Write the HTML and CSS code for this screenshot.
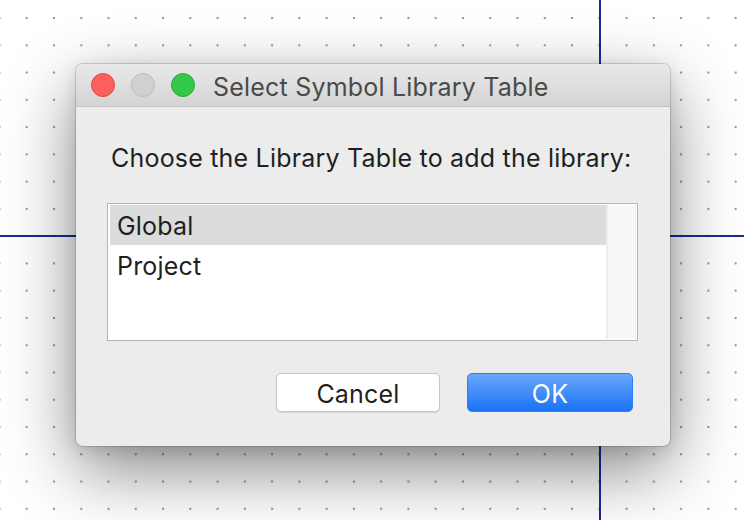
FILE: index.html
```html
<!DOCTYPE html>
<html>
<head>
<meta charset="utf-8">
<link rel="stylesheet" href="styles.css">
</head>
<body>
<div class="desktop">
  <div class="wire wire-v"></div>
  <div class="wire wire-h"></div>
  <div class="dialog">
    <div class="titlebar">
      <div class="lights">
        <span class="light red"></span>
        <span class="light gray"></span>
        <span class="light green"></span>
      </div>
      <div class="title">Select Symbol Library Table</div>
    </div>
    <div class="content">
      <div class="prompt">Choose the Library Table to add the library:</div>
      <div class="listbox">
        <div class="rows">
          <div class="row selected">Global</div>
          <div class="row">Project</div>
        </div>
        <div class="scrolltrack"></div>
      </div>
      <div class="buttons">
        <button class="btn cancel">Cancel</button>
        <button class="btn ok">OK</button>
      </div>
    </div>
  </div>
</div>
</body>
</html>
```

FILE: styles.css
```css
html, body {
  margin: 0;
  padding: 0;
}
body {
  width: 744px;
  height: 520px;
  overflow: hidden;
  font-family: Inter, "Liberation Sans", sans-serif;
}
.desktop {
  position: relative;
  width: 744px;
  height: 520px;
  background-color: #ffffff;
  background-image: radial-gradient(circle, #9a9a9a 0, #9a9a9a 0.8px, rgba(154,154,154,0) 1.6px);
  background-size: 27.27px 27.27px;
  background-position: -14.2px 4.4px;
  overflow: hidden;
}
.wire {
  position: absolute;
  background: #1b2a9c;
}
.wire-v {
  left: 599px;
  top: 0;
  width: 2px;
  height: 520px;
}
.wire-h {
  left: 0;
  top: 235px;
  width: 744px;
  height: 2px;
}
.dialog {
  position: absolute;
  left: 76px;
  top: 64px;
  width: 594px;
  height: 382px;
  border-radius: 7px;
  background: #ececec;
  box-shadow: 0 0 0 1px rgba(0,0,0,0.14), 0 24px 70px rgba(0,0,0,0.48), 0 4px 16px rgba(0,0,0,0.12);
  display: flex;
  flex-direction: column;
  overflow: hidden;
}
.titlebar {
  height: 42px;
  flex: none;
  display: flex;
  align-items: center;
  padding-left: 15px;
  background: linear-gradient(#e9e9e9, #d4d4d4);
  border-bottom: 1px solid #c4c4c4;
}
.lights {
  display: flex;
  gap: 16px;
}
.light {
  width: 22px;
  height: 22px;
  border-radius: 50%;
  display: block;
}
.red { background: #fc605c; border: 1px solid #df4a45; }
.gray { background: #d0d0d0; border: 1px solid #bdbdbd; }
.green { background: #34c84a; border: 1px solid #28a93c; }
.title {
  margin-left: 18px;
  padding-top: 3px;
  font-size: 25px;
  line-height: 30px;
  letter-spacing: 0.2px;
  color: #4a4a4a;
}
.content {
  flex: 1;
  display: flex;
  flex-direction: column;
  padding: 0 32px 0 31px;
}
.prompt {
  margin-top: 36px;
  margin-left: 4px;
  font-size: 25px;
  line-height: 30px;
  letter-spacing: 0.2px;
  color: #1f1f1f;
  white-space: nowrap;
}
.listbox {
  margin-top: 30px;
  height: 134px;
  border: 1px solid #b4b4b4;
  background: #ffffff;
  display: flex;
  padding: 1px 1px 1px 2px;
}
.rows {
  flex: 1;
}
.row {
  height: 40px;
  padding-left: 7px;
  padding-top: 2px;
  box-sizing: border-box;
  font-size: 25px;
  line-height: 38px;
  letter-spacing: 0.2px;
  color: #1f1f1f;
}
.row.selected {
  background: #dcdcdc;
}
.scrolltrack {
  width: 27px;
  background: #f8f8f8;
  border-left: 2px solid #ececec;
  border-right: 1px solid #ececec;
}
.buttons {
  margin-top: 32px;
  display: flex;
  justify-content: flex-end;
  gap: 27px;
  padding-right: 5px;
}
.btn {
  height: 39px;
  font-family: Inter, "Liberation Sans", sans-serif;
  font-size: 25px;
  line-height: 30px;
  letter-spacing: 0.2px;
  border-radius: 5px;
  padding: 2px 0 0 0;
}
.cancel {
  width: 164px;
  background: #ffffff;
  color: #1f1f1f;
  border: 1px solid #c6c6c6;
  box-shadow: 0 1px 1px rgba(0,0,0,0.1);
}
.ok {
  width: 166px;
  color: #ffffff;
  border: 1px solid #2a7df2;
  background: linear-gradient(#69a8fb, #1a72f6);
}
```
